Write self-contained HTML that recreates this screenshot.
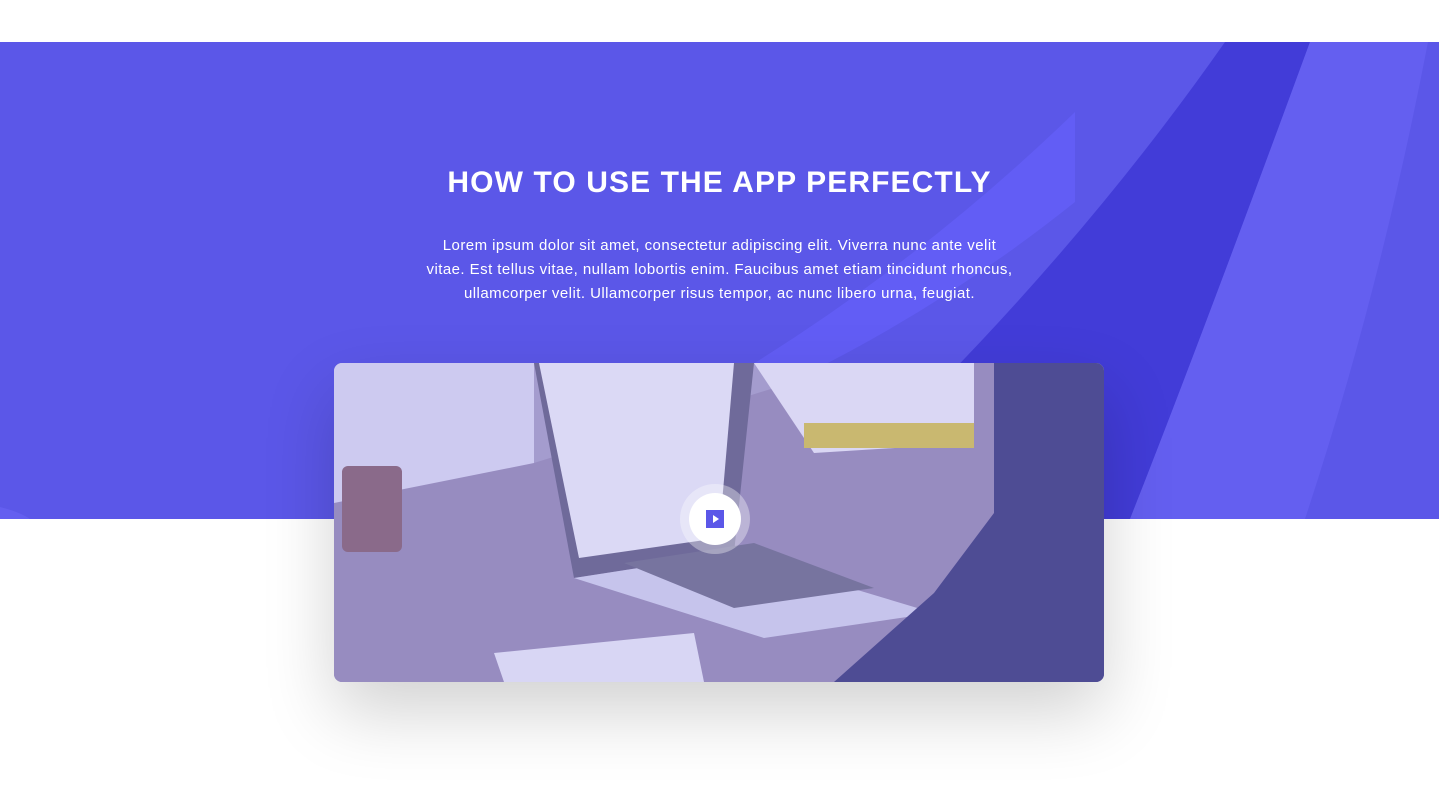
<!DOCTYPE html>
<html><head><style>
html,body{margin:0;padding:0;width:1439px;height:792px;background:#fff;overflow:hidden;font-family:"Liberation Sans",sans-serif;}
.hero{position:absolute;left:0;top:42px;width:1439px;height:477px;background:#5b57e8;overflow:hidden;}
h1{position:absolute;top:166px;left:0;width:1439px;text-align:center;margin:0;color:#fff;font-size:30px;font-weight:bold;letter-spacing:1.1px;}
p{position:absolute;top:234px;left:320px;width:799px;text-align:center;margin:0;color:#fff;font-size:15px;letter-spacing:0.45px;line-height:24px;}
.card{position:absolute;left:334px;top:363px;width:770px;height:319px;border-radius:8px;overflow:hidden;box-shadow:0 30px 70px rgba(0,0,0,0.18);background:#a9a5dc;}
</style></head><body>
<div class="hero">
<svg width="1439" height="477" style="position:absolute;left:0;top:0">
<path d="M1075 70 L1075 160 Q950 260 810 330 L740 330 Q920 220 1075 70Z" fill="#625df5"/>
<path d="M1225 0 L1310 0 Q1200 300 1130 477 L800 477 Q1050 250 1225 0Z" fill="#423cd8"/>
<path d="M1310 0 L1428 0 Q1380 250 1305 477 L1130 477 Q1200 300 1310 0Z" fill="#645ff0"/>
<path d="M0 465 Q20 470 30 477 L0 477Z" fill="#645ff0"/>
</svg>
</div>
<h1>HOW TO USE THE APP PERFECTLY</h1>
<p>Lorem ipsum dolor sit amet, consectetur adipiscing elit. Viverra nunc ante velit<br>vitae. Est tellus vitae, nullam lobortis enim. Faucibus amet etiam tincidunt rhoncus,<br>ullamcorper velit. Ullamcorper risus tempor, ac nunc libero urna, feugiat.</p>
<div class="card">
<svg width="770" height="319" style="position:absolute;left:0;top:0">
<rect width="770" height="319" fill="#a49cce"/>
<rect width="200" height="140" fill="#cdcaf0"/>
<polygon points="0,140 200,100 520,0 770,0 770,319 0,319" fill="#978cc0"/>
<rect x="8" y="103" width="60" height="86" rx="6" fill="#8a6a8a"/>
<polygon points="200,0 420,0 400,190 240,215" fill="#6f6a9a"/>
<polygon points="205,0 400,0 385,175 245,195" fill="#dbd9f5"/>
<polygon points="240,215 400,190 600,250 430,275" fill="#c6c4ec"/>
<polygon points="290,200 420,180 540,225 400,245" fill="#77749f"/>
<polygon points="420,0 640,0 640,80 480,90" fill="#dad7f4"/>
<rect x="470" y="60" width="170" height="25" fill="#c9b870"/>
<polygon points="660,0 770,0 770,319 500,319 600,230 660,150" fill="#4e4c94"/>
<polygon points="160,290 360,270 370,319 170,319" fill="#d8d6f4"/>
</svg>
<div style="position:absolute;left:346px;top:121px;width:70px;height:70px;border-radius:50%;background:rgba(255,255,255,0.35)"></div>
<div style="position:absolute;left:355px;top:130px;width:52px;height:52px;border-radius:50%;background:#fff"></div>
<div style="position:absolute;left:372px;top:147px;width:18px;height:18px;background:#5b57e8"></div>
<div style="position:absolute;left:379px;top:152px;width:0;height:0;border-left:6px solid #fff;border-top:4px solid transparent;border-bottom:4px solid transparent"></div>
</div>
</body></html>
